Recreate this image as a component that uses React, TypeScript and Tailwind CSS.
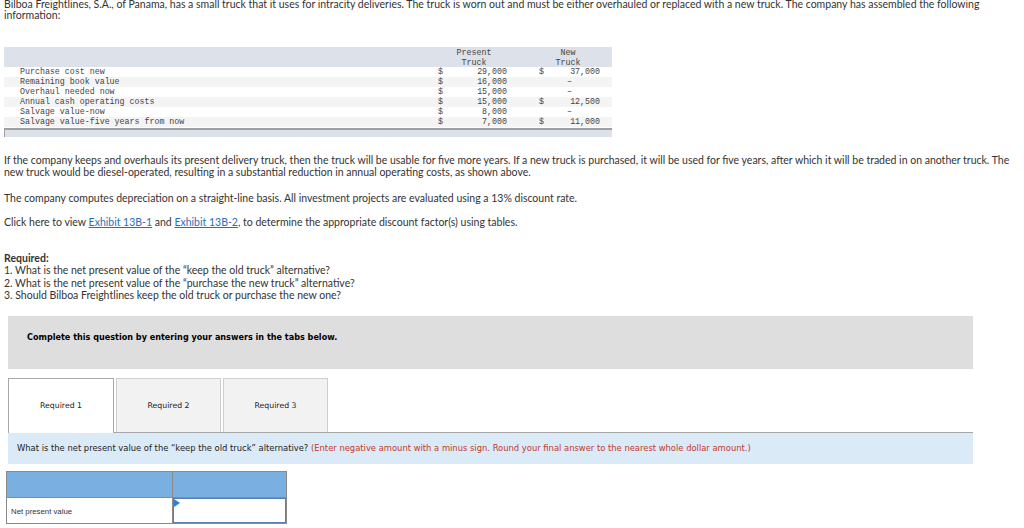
import React from "react";

const rows = [
  { label: "Purchase cost new", p: "29,000", nd: true, n: "37,000" },
  { label: "Remaining book value", p: "16,000", nd: false, n: "–" },
  { label: "Overhaul needed now", p: "15,000", nd: false, n: "–" },
  { label: "Annual cash operating costs", p: "15,000", nd: true, n: "12,500" },
  { label: "Salvage value-now", p: "8,000", nd: false, n: "–" },
  { label: "Salvage value-five years from now", p: "7,000", nd: true, n: "11,000" },
];

function DataTable() {
  return (
    <div className="ml-[4px] w-[608px] font-['Liberation_Mono',monospace] text-[8.3px] text-[#444]">
      <div className="flex h-[20px] bg-[#dde1ea] leading-[9.5px] pt-[1px]">
        <div className="w-[450px]" />
        <div className="w-[40px] text-center">
          Present
          <br />
          Truck
        </div>
        <div className="w-[52px]" />
        <div className="w-[44px] text-center">
          New
          <br />
          Truck
        </div>
      </div>
      {rows.map((r, i) => (
        <div
          key={r.label}
          className={`flex h-[10px] leading-[10px] ${i % 2 === 1 ? "bg-[#f4f4f4]" : "bg-white"}`}
        >
          <div className="w-[432px] pl-[16px]">{r.label}</div>
          <div className="w-[18px] pl-[2px]">$</div>
          <div className="w-[54px] text-right pr-[1px]">{r.p}</div>
          <div className="w-[40px] pl-[31px]">{r.nd ? "$" : ""}</div>
          {r.n === "–" ? (
            <div className="w-[64px] pl-[19px]">–</div>
          ) : (
            <div className="w-[64px] text-right pr-[12px]">{r.n}</div>
          )}
        </div>
      ))}
      <div className="mt-[1px] h-[9px] border-t-2 border-l border-[#a0a0a0] bg-[#dde1ea]" />
    </div>
  );
}

export default function App() {
  return (
    <div className="w-[1024px] h-[528px] overflow-hidden bg-white font-['Lato','Open_Sans',sans-serif] text-[#333]">
      <p className="-mt-[1px] px-[4px] text-[10.5px] leading-[11px]">
        Bilboa Freightlines, S.A., of Panama, has a small truck that it uses for intracity deliveries. The truck is worn out
        and must be either overhauled or replaced with a new truck. The company has assembled the following information:
      </p>
      <div className="mt-[26px]">
        <DataTable />
      </div>
      <div className="px-[4px] text-[10.5px] leading-[12px]">
        <p className="mt-[17px]">
          If the company keeps and overhauls its present delivery truck, then the truck will be usable for five more years. If a
          new truck is purchased, it will be used for five years, after which it will be traded in on another truck. The new
          truck would be diesel-operated, resulting in a substantial reduction in annual operating costs, as shown above.
        </p>
        <p className="mt-[14px]">
          The company computes depreciation on a straight-line basis. All investment projects are evaluated using a 13% discount
          rate.
        </p>
        <p className="mt-[12px]">
          Click here to view{" "}
          <a className="text-[#2a6ebb] underline" href="#">
            Exhibit 13B-1
          </a>{" "}
          and{" "}
          <a className="text-[#2a6ebb] underline" href="#">
            Exhibit 13B-2
          </a>
          , to determine the appropriate discount factor(s) using tables.
        </p>
        <div className="mt-[24px] leading-[12.3px]">
          <p className="font-bold">Required:</p>
          <p>1. What is the net present value of the “keep the old truck” alternative?</p>
          <p>2. What is the net present value of the “purchase the new truck” alternative?</p>
          <p>3. Should Bilboa Freightlines keep the old truck or purchase the new one?</p>
        </div>
      </div>

      <div className="ml-[8px] w-[965px] mt-[15px] h-[53px] bg-[#dedede] pl-[19px] pt-[16px] leading-[10px] font-['DejaVu_Sans',sans-serif] text-[8.1px] font-bold text-black">
        Complete this question by entering your answers in the tabs below.
      </div>

      <div className="ml-[8px] w-[965px] mt-[9px] font-['DejaVu_Sans',sans-serif] text-[7.8px] text-[#222]">
        <div className="flex gap-[2px] border-b border-[#a8a8a8] h-[55px] items-end">
          <div className="w-[106px] h-[55px] -mb-px border border-b-0 border-[#a8a8a8] bg-white flex items-center justify-center">
            Required 1
          </div>
          <div className="w-[105px] h-[54px] border border-b-0 border-[#cfcfcf] bg-[#f2f2f2] flex items-center justify-center">
            Required 2
          </div>
          <div className="w-[105px] h-[54px] border border-b-0 border-[#cfcfcf] bg-[#f2f2f2] flex items-center justify-center">
            Required 3
          </div>
        </div>
        <div className="h-[31px] bg-[#dbeaf7] pl-[9px] flex items-center text-[8.4px]">
          <span>
            What is the net present value of the “keep the old truck” alternative?{" "}
            <span className="text-[#c0392b]">
              (Enter negative amount with a minus sign. Round your final answer to the nearest whole dollar amount.)
            </span>
          </span>
        </div>
      </div>

      <div className="ml-[6px] mt-[7px] w-[281px] border border-[#8a8a8a] font-['Liberation_Sans',sans-serif] text-[7.8px] text-[#333]">
        <div className="flex h-[26px] bg-[#7aafe2] border-b border-[#8a8a8a]">
          <div className="w-[166px] border-r border-[#8a8a8a]" />
          <div className="flex-1" />
        </div>
        <div className="flex h-[25px]">
          <div className="w-[166px] border-r border-[#8a8a8a] pl-[4px] flex items-center pt-[2px]">Net present value</div>
          <div className="relative flex-1 border border-[#5a7fb8] bg-white">
            <span className="absolute left-0 top-0 w-0 h-0 border-t-[4px] border-b-[4px] border-l-[6px] border-t-transparent border-b-transparent border-l-[#2f7fd6]" />
          </div>
        </div>
      </div>
    </div>
  );
}
